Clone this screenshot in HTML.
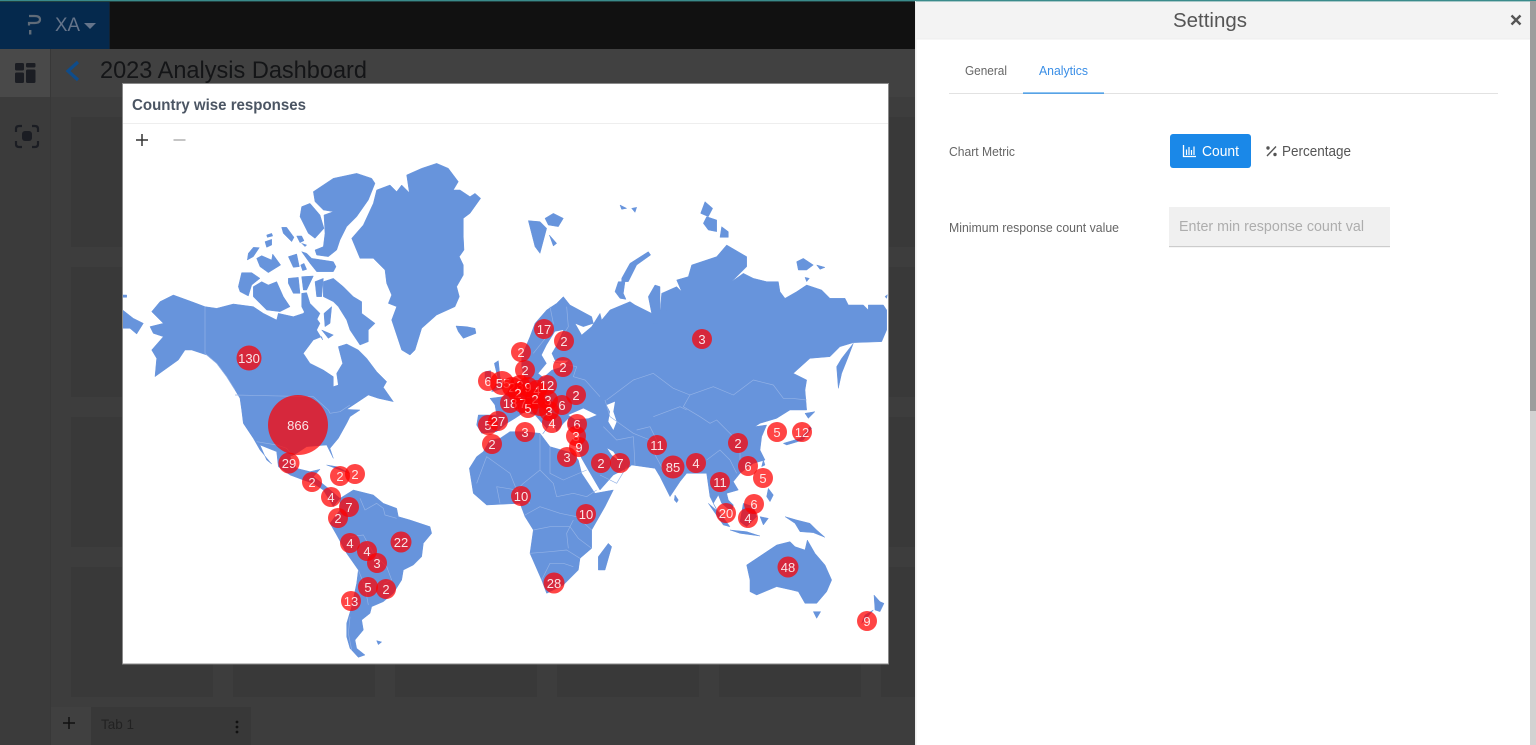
<!DOCTYPE html>
<html lang="en">
<head>
<meta charset="utf-8">
<title>Settings</title>
<style>
html,body{margin:0;padding:0;background:#3d3d3d;width:1536px;height:745px;overflow:hidden}
svg{position:absolute;left:0;top:0;display:block}
text{font-family:"Liberation Sans",sans-serif}
.land polygon{fill:#6794dc;stroke:#6794dc;stroke-width:1.5;stroke-linejoin:round}
.sea polygon{fill:#fff;stroke:none}
.bord polyline{fill:none;stroke:#93b2e6;stroke-width:2;stroke-linejoin:round}
.cl circle{fill:#ff0000;fill-opacity:.73}
.cl text{fill:#fff;fill-opacity:.88;font-size:13px;text-anchor:middle}
</style>
</head>
<body>
<svg width="1536" height="745" viewBox="0 0 1536 745" xmlns="http://www.w3.org/2000/svg">
<!-- app background -->
<rect width="1536" height="745" fill="#3d3d3d"/>
<rect x="0" y="0" width="916" height="49" fill="#111"/>
<rect x="0" y="2" width="110" height="47" fill="#05294d"/>
<rect x="109" y="2" width="1" height="47" fill="#123"/>
<rect x="0" y="49" width="50" height="48" fill="#494949"/>
<rect x="0" y="97" width="50" height="648" fill="#3b3b3b"/>
<rect x="50" y="49" width="1" height="696" fill="#383838"/>
<rect x="51" y="49" width="865" height="48" fill="#414141"/>
<g fill="#393939">
<rect x="71" y="117" width="142" height="130"/><rect x="233" y="117" width="142" height="130"/><rect x="395" y="117" width="142" height="130"/><rect x="557" y="117" width="142" height="130"/><rect x="719" y="117" width="142" height="130"/><rect x="881" y="117" width="35" height="130"/>
<rect x="71" y="267" width="142" height="130"/><rect x="233" y="267" width="142" height="130"/><rect x="395" y="267" width="142" height="130"/><rect x="557" y="267" width="142" height="130"/><rect x="719" y="267" width="142" height="130"/><rect x="881" y="267" width="35" height="130"/>
<rect x="71" y="417" width="142" height="130"/><rect x="233" y="417" width="142" height="130"/><rect x="395" y="417" width="142" height="130"/><rect x="557" y="417" width="142" height="130"/><rect x="719" y="417" width="142" height="130"/><rect x="881" y="417" width="35" height="130"/>
<rect x="71" y="567" width="142" height="130"/><rect x="233" y="567" width="142" height="130"/><rect x="395" y="567" width="142" height="130"/><rect x="557" y="567" width="142" height="130"/><rect x="719" y="567" width="142" height="130"/><rect x="881" y="567" width="35" height="130"/>
</g>
<!-- tab bar -->
<rect x="51" y="707" width="40" height="38" fill="#404040"/>
<rect x="91" y="707" width="160" height="38" fill="#383838"/>
<path d="M63 723H75M69 717V729" stroke="#111" stroke-width="1.5"/>
<text x="101" y="729" font-size="14" fill="#222" textLength="33" lengthAdjust="spacingAndGlyphs">Tab 1</text>
<g fill="#111"><circle cx="237" cy="722" r="1.4"/><circle cx="237" cy="727" r="1.4"/><circle cx="237" cy="732" r="1.4"/></g>
<!-- header -->
<path d="M29 25.5V23H34.5Q40 23 40 19.5T34.5 16H29" fill="none" stroke="#5f6b78" stroke-width="2.2"/>
<rect x="29" y="30" width="2.4" height="4.5" fill="#5f6b78"/>
<text x="55" y="31" font-size="19" fill="#65748a" textLength="25" lengthAdjust="spacingAndGlyphs">XA</text>
<path d="M84 23H96L90 29Z" fill="#65748a"/>
<rect x="0" y="0" width="1536" height="1.4" fill="#3a8b8b"/>
<!-- sidebar icons -->
<g fill="#1b1d23">
<rect x="15" y="63" width="9" height="7.5" rx="1.5"/><rect x="15" y="72.5" width="9" height="10.5" rx="1.5"/><rect x="26" y="63" width="9.5" height="4.5" rx="1.2"/><rect x="26" y="69.5" width="9.5" height="13.5" rx="1.5"/>
<rect x="22" y="131" width="10" height="10" rx="3"/>
</g>
<path d="M16 132V129Q16 126 19 126H22M32 126H35Q38 126 38 129V132M38 141V144Q38 147 35 147H32M22 147H19Q16 147 16 144V141" fill="none" stroke="#1b1d23" stroke-width="2.2"/>
<path d="M78 62L68 71L78 80" fill="none" stroke="#0f4c8a" stroke-width="3.2"/>
<text x="100" y="78" font-size="24" fill="#141517" textLength="267" lengthAdjust="spacingAndGlyphs">2023 Analysis Dashboard</text>

<!-- map card -->
<rect x="122.5" y="83.5" width="766" height="580.5" fill="#fff" stroke="#8a8a8a" stroke-width="1"/>
<rect x="123" y="123" width="765" height="1" fill="#eee"/>
<text x="132" y="110" font-size="16" font-weight="bold" fill="#4b5563" textLength="174" lengthAdjust="spacingAndGlyphs">Country wise responses</text>
<path d="M136 140H148M142 134V146" stroke="#333" stroke-width="1.5"/>
<path d="M173.500 140H185.500" stroke="#bbb" stroke-width="1.7"/>

<svg x="123" y="84" width="765" height="579" viewBox="123 84 765 579">
<g transform="translate(120,150) scale(.33333)">
<g class="land">
<!-- Greenland -->
<polygon points="860,75 905,55 950,40 985,55 1015,95 1000,120 1020,120 1050,140 1065,130 1082,145 1050,190 1030,205 1030,260 1032,300 1018,320 1030,345 1030,375 1010,410 1018,440 1005,470 950,495 905,535 885,600 870,615 845,600 825,540 815,510 830,470 805,460 815,435 800,400 795,360 760,325 720,325 695,265 730,225 760,160 770,120 810,105 830,125 845,105 868,128"/>
<polygon points="580,125 640,85 710,70 755,85 765,100 745,150 710,200 680,230 660,270 650,300 625,320 590,315 585,300 610,290 615,250 612,195 640,185 610,180 585,155"/>
<polygon points="545,170 570,160 600,195 612,235 585,265 565,250 540,200"/>
<polygon points="485,232 500,232 522,262 515,275 490,250"/>
<polygon points="530,258 545,258 552,272 540,278"/>
<polygon points="545,280 560,285 555,290"/>
<polygon points="440,255 455,250 458,258 442,262"/>
<polygon points="435,275 455,268 455,285 440,292"/>
<polygon points="385,310 400,292 418,293 400,320 382,330"/>
<polygon points="410,325 425,317 455,330 458,312 482,345 445,368 420,350"/>
<polygon points="505,320 530,312 538,350 520,352"/>
<polygon points="545,305 560,310 575,325 640,335 648,350 640,365 590,365 570,340"/>
<polygon points="542,345 552,340 560,358 548,362"/>
<polygon points="365,368 395,368 420,385 395,405 385,438 360,425 355,410"/>
<polygon points="400,410 425,395 445,405 470,395 490,440 510,470 480,485 440,480 420,460 400,440"/>
<polygon points="505,385 535,382 540,430 520,430 505,400"/>
<polygon points="545,380 580,378 560,420 550,420"/>
<polygon points="585,395 610,385 605,440 590,440"/>
<polygon points="610,395 640,385 670,410 700,440 725,455 725,490 765,520 745,540 745,575 720,585 690,540 680,510 655,470 640,455 610,440"/>
<polygon points="612,490 635,470 630,520 615,530"/>
<polygon points="605,540 640,555 625,565"/>
<polygon points="545,430 560,428 570,460 600,490 590,510 560,500 545,470"/>
<!-- Chukotka west -->
<polygon points="8,480 40,505 70,520 50,552 30,535 8,535"/>
<polygon points="8,435 20,435 20,442 8,442"/>
<!-- North America -->
<polygon points="95,485 120,455 160,435 215,455 255,470 290,475 340,462 400,470 430,490 470,510 475,490 520,500 550,490 565,470 600,520 590,540 608,570 605,560 580,570 550,610 570,640 610,660 640,680 640,710 655,705 650,670 668,640 655,590 680,582 715,600 740,625 770,665 800,695 790,712 820,755 775,745 745,735 700,765 680,778 720,780 690,800 680,820 655,865 630,895 640,925 620,885 560,890 530,910 510,920 530,955 570,965 600,958 580,980 600,995 625,1015 660,1045 640,1070 610,1020 580,1000 550,990 510,975 475,950 470,905 420,885 440,930 455,942 420,900 400,865 370,820 365,780 360,745 345,720 320,680 290,640 260,615 215,600 195,600 175,630 105,680 110,625 95,600 130,560 100,550 90,530 130,520"/>
<polygon points="620,945 650,950 690,970 660,960"/>
<!-- South America -->
<polygon points="660,1045 700,1020 760,1035 790,1060 830,1075 835,1100 870,1110 930,1130 935,1150 910,1180 905,1220 880,1245 850,1260 845,1290 820,1330 790,1355 755,1370 750,1390 725,1410 730,1440 705,1470 710,1495 735,1515 715,1522 690,1495 680,1460 680,1420 695,1370 710,1300 715,1260 680,1210 650,1155 630,1120 660,1080"/>
<polygon points="770,1472 785,1476 775,1484"/>
<!-- Iceland -->
<polygon points="1008,528 1040,530 1065,535 1068,550 1030,565 1015,545"/>
<!-- Svalbard, FJL, Severnaya, Novaya Zemlya, NSI -->
<polygon points="1225,212 1260,215 1280,235 1260,310 1245,290"/>
<polygon points="1275,205 1300,190 1330,205 1315,230 1285,225"/>
<polygon points="1288,255 1310,280 1300,288"/>
<polygon points="1500,165 1520,175 1505,178"/>
<polygon points="1535,175 1550,172 1545,187"/>
<polygon points="1755,155 1778,175 1765,200 1742,190"/>
<polygon points="1760,200 1790,210 1790,245 1765,240 1750,220"/>
<polygon points="1805,230 1825,245 1825,262 1800,262"/>
<polygon points="1505,385 1530,340 1585,305 1592,315 1550,345 1525,395 1505,395"/>
<polygon points="1495,395 1515,395 1510,430 1518,448 1500,445 1485,425"/>
<polygon points="2030,335 2050,325 2080,345 2060,360 2035,360"/>
<polygon points="2090,345 2115,352 2100,358"/>
<polygon points="2055,382 2068,385 2060,395"/>
<polygon points="2295,440 2302,434 2300,445"/>
<!-- Eurasia -->
<polygon points="1330,440 1350,465 1415,500 1420,520 1390,530 1365,520 1385,555 1415,530 1440,490 1445,510 1470,480 1530,455 1545,465 1595,490 1585,440 1605,405 1620,410 1620,480 1645,480 1625,490 1615,520 1600,520 1620,495 1625,430 1670,410 1685,425 1670,390 1705,380 1715,345 1790,320 1820,285 1880,320 1880,350 1835,395 1870,370 1900,385 1940,395 1975,395 1980,425 1995,445 2030,425 2060,405 2105,420 2130,445 2175,445 2185,465 2230,465 2245,480 2245,465 2290,465 2300,480 2300,540 2285,575 2200,578 2160,590 2130,620 2070,625 2020,670 2060,690 2055,720 2060,780 2010,780 1970,805 1920,820 1905,830 1940,825 1925,860 1920,900 1935,930 1900,940 1860,970 1840,995 1855,1020 1820,1030 1825,1050 1840,1065 1835,1085 1805,1060 1795,1035 1780,1060 1800,1095 1825,1130 1795,1090 1770,1040 1760,970 1730,970 1700,970 1680,995 1650,1040 1620,980 1605,955 1535,945 1530,950 1480,975 1440,1020 1405,960 1385,925 1375,900 1380,860 1375,845 1345,830 1345,805 1330,820 1310,845 1300,815 1245,765 1295,815 1285,830 1268,852 1280,835 1245,795 1215,785 1185,805 1160,820 1130,845 1085,850 1070,825 1075,795 1130,795 1125,765 1110,745 1150,740 1175,710 1200,690 1215,690 1205,650 1205,620 1230,560 1245,520 1280,480 1310,460"/>
<polygon points="1123,640 1135,632 1140,680 1150,715 1115,725 1135,690"/>
<polygon points="1095,665 1112,662 1112,690 1095,688"/>
<!-- Africa -->
<polygon points="1048,955 1070,920 1090,905 1110,870 1140,865 1170,845 1210,845 1260,850 1290,890 1360,910 1375,930 1385,970 1425,1030 1480,1020 1455,1070 1415,1140 1415,1195 1380,1225 1375,1260 1330,1305 1280,1330 1265,1290 1230,1210 1240,1140 1215,1100 1200,1060 1100,1065 1060,1030"/>
<polygon points="1465,1180 1475,1190 1455,1260 1435,1260 1435,1220"/>
<!-- Sakhalin, Japan, Asia islands -->
<polygon points="2200,580 2185,620 2165,670 2155,715 2150,650 2165,625"/>
<polygon points="2055,790 2085,785 2065,805"/>
<polygon points="1990,880 2040,865 2070,830 2075,835 2050,870 2000,885"/>
<polygon points="1930,930 1935,945 1925,950"/>
<polygon points="1945,1015 1960,1035 1950,1055 1940,1040"/>
<polygon points="1765,1060 1800,1090 1830,1130 1810,1125"/>
<polygon points="1830,1140 1880,1145 1920,1158 1860,1150"/>
<polygon points="1870,1060 1900,1070 1910,1100 1880,1130 1860,1115"/>
<polygon points="1920,1100 1945,1105 1930,1125"/>
<polygon points="1995,1100 2030,1110 2070,1120 2090,1140 2115,1162 2080,1148 2040,1145 2025,1120"/>
<polygon points="1665,1035 1675,1050 1670,1058 1663,1050"/>
<!-- Australia etc. -->
<polygon points="1880,1245 1940,1205 1970,1185 2010,1175 2025,1190 2055,1200 2062,1170 2085,1210 2115,1245 2135,1290 2120,1325 2090,1360 2055,1360 2035,1325 2015,1320 1970,1310 1910,1335 1890,1325 1890,1290"/>
<polygon points="2080,1385 2102,1385 2090,1405"/>
<polygon points="2262,1335 2280,1355 2292,1360 2280,1385 2265,1380"/>
<polygon points="2260,1380 2240,1405 2225,1420 2235,1395"/>
</g>
<g class="sea">
<polygon points="1305,545 1280,585 1265,615 1280,640 1255,670 1270,682 1295,660 1320,652 1345,632 1305,632 1295,610 1310,585 1330,540"/>
<polygon points="1345,795 1390,775 1430,795 1405,805 1365,808"/>
<polygon points="1460,765 1485,755 1480,785 1490,815 1480,840 1465,815 1470,785"/>
<polygon points="1462,895 1480,905 1500,935 1475,915"/>
</g>
<g class="bord">
<polyline points="255,470 255,610 290,640 320,680 345,720"/>
<polyline points="345,735 580,740 625,780 630,790 660,785 690,765"/>
<polyline points="410,875 470,885 500,895 520,920"/>
<polyline points="720,1045 735,1080 770,1060 790,1075 795,1095 830,1105"/>
<polyline points="690,1160 730,1155 760,1210 800,1250 815,1290 790,1300"/>
<polyline points="715,1260 735,1310 745,1365"/>
<polyline points="690,1400 685,1450 695,1500"/>
<polyline points="1070,1000 1100,920 1170,970 1190,1020 1230,1060"/>
<polyline points="1140,1060 1130,1010 1190,1020 1210,1000 1260,960 1260,850"/>
<polyline points="1290,890 1290,970 1330,990 1400,960"/>
<polyline points="1260,960 1300,1000 1310,1040 1360,1030 1400,1040 1430,1020"/>
<polyline points="1215,1095 1260,1070 1320,1090 1370,1100 1415,1140"/>
<polyline points="1240,1140 1290,1130 1350,1130 1375,1165 1415,1195"/>
<polyline points="1230,1210 1290,1205 1340,1200 1380,1225"/>
<polyline points="1265,1290 1290,1240 1330,1240 1360,1250"/>
<polyline points="1360,1110 1340,1150 1345,1195"/>
<polyline points="1460,750 1540,690 1600,670 1660,715 1710,735 1780,710 1840,735 1900,690 1960,705 1990,745 2015,745 2060,750"/>
<polyline points="1455,750 1470,800 1540,850 1590,870 1620,880"/>
<polyline points="1710,735 1690,770 1740,800 1770,820 1790,810 1830,850 1860,880 1860,930"/>
<polyline points="1600,800 1680,770 1700,780"/>
<polyline points="1550,840 1590,830 1610,870 1600,905 1630,960"/>
<polyline points="1450,830 1490,870 1540,860 1545,945"/>
<polyline points="1290,470 1300,520 1280,560 1240,610"/>
<polyline points="1340,470 1345,530 1320,570"/>
<polyline points="1300,635 1370,650 1360,680 1395,690 1440,740"/>
<polyline points="1760,930 1800,900 1830,930 1850,970"/>
<polyline points="1440,975 1490,1000 1520,950"/>
</g>
</g>
<g class="cl">
<circle cx="298" cy="425" r="30"/><text x="298" y="430">866</text>
<circle cx="249" cy="358" r="12.500"/><text x="249" y="363">130</text>
<circle cx="289" cy="463" r="10.500"/><text x="289" y="468">29</text>
<circle cx="312" cy="482" r="10"/><text x="312" y="487">2</text>
<circle cx="340" cy="476" r="10"/><text x="340" y="481">2</text>
<circle cx="355" cy="474" r="10"/><text x="355" y="479">2</text>
<circle cx="331" cy="497" r="10"/><text x="331" y="502">4</text>
<circle cx="349" cy="507" r="10"/><text x="349" y="512">7</text>
<circle cx="338" cy="518" r="10"/><text x="338" y="523">2</text>
<circle cx="350" cy="543" r="10"/><text x="350" y="548">4</text>
<circle cx="367" cy="551" r="10"/><text x="367" y="556">4</text>
<circle cx="377" cy="563" r="10"/><text x="377" y="568">3</text>
<circle cx="401" cy="542" r="10.500"/><text x="401" y="547">22</text>
<circle cx="368" cy="587" r="10"/><text x="368" y="592">5</text>
<circle cx="386" cy="589" r="10"/><text x="386" y="594">2</text>
<circle cx="351" cy="601" r="10"/><text x="351" y="606">13</text>
<circle cx="544" cy="329" r="10"/><text x="544" y="334">17</text>
<circle cx="564" cy="341" r="10"/><text x="564" y="346">2</text>
<circle cx="521" cy="352" r="10"/><text x="521" y="357">2</text>
<circle cx="525" cy="370" r="10"/><text x="525" y="375">2</text>
<circle cx="563" cy="367" r="10"/><text x="563" y="372">2</text>
<circle cx="488" cy="381" r="10"/><text x="488" y="386">6</text>
<circle cx="502" cy="383" r="12"/><text x="503" y="388">55</text>
<circle cx="512" cy="387" r="10"/><text x="512" y="392">2</text>
<circle cx="520" cy="385" r="10"/><text x="520" y="390">3</text>
<circle cx="528" cy="387" r="10"/><text x="528" y="392">9</text>
<circle cx="518" cy="393" r="10"/><text x="518" y="398">2</text>
<circle cx="537" cy="390" r="10"/><text x="537" y="395">4</text>
<circle cx="547" cy="385" r="10"/><text x="547" y="390">12</text>
<circle cx="510" cy="403" r="10"/><text x="510" y="408">18</text>
<circle cx="523" cy="403" r="10"/><text x="523" y="408">7</text>
<circle cx="528" cy="408" r="10"/><text x="528" y="413">5</text>
<circle cx="535" cy="399" r="10"/><text x="535" y="404">2</text>
<circle cx="548" cy="400" r="10"/><text x="548" y="405">3</text>
<circle cx="540" cy="407" r="9"/>
<circle cx="549" cy="411" r="10"/><text x="549" y="416">3</text>
<circle cx="562" cy="405" r="10"/><text x="562" y="410">6</text>
<circle cx="576" cy="395" r="10"/><text x="576" y="400">2</text>
<circle cx="552" cy="423" r="10"/><text x="552" y="428">4</text>
<circle cx="488" cy="425" r="10"/><text x="488" y="430">5</text>
<circle cx="498" cy="421" r="10"/><text x="498" y="426">27</text>
<circle cx="525" cy="432" r="10"/><text x="525" y="437">3</text>
<circle cx="492" cy="444" r="10"/><text x="492" y="449">2</text>
<circle cx="577" cy="424" r="10"/><text x="577" y="429">6</text>
<circle cx="576" cy="436" r="10"/><text x="576" y="441">3</text>
<circle cx="579" cy="447" r="10"/><text x="579" y="452">9</text>
<circle cx="567" cy="457" r="10"/><text x="567" y="462">3</text>
<circle cx="601" cy="463" r="10"/><text x="601" y="468">2</text>
<circle cx="620" cy="463" r="10"/><text x="620" y="468">7</text>
<circle cx="657" cy="445" r="10"/><text x="657" y="450">11</text>
<circle cx="673" cy="467" r="11.500"/><text x="673" y="472">85</text>
<circle cx="696" cy="463" r="10"/><text x="696" y="468">4</text>
<circle cx="720" cy="482" r="10"/><text x="720" y="487">11</text>
<circle cx="738" cy="443" r="10"/><text x="738" y="448">2</text>
<circle cx="748" cy="466" r="10"/><text x="748" y="471">6</text>
<circle cx="763" cy="478" r="10"/><text x="763" y="483">5</text>
<circle cx="777" cy="432" r="10"/><text x="777" y="437">5</text>
<circle cx="802" cy="432" r="10"/><text x="802" y="437">12</text>
<circle cx="726" cy="513" r="10"/><text x="726" y="518">20</text>
<circle cx="754" cy="504" r="10"/><text x="754" y="509">6</text>
<circle cx="748" cy="518" r="10"/><text x="748" y="523">4</text>
<circle cx="788" cy="567" r="10.500"/><text x="788" y="572">48</text>
<circle cx="586" cy="514" r="10"/><text x="586" y="519">10</text>
<circle cx="554" cy="583" r="10.500"/><text x="554" y="588">28</text>
<circle cx="867" cy="621" r="10"/><text x="867" y="626">9</text>
<circle cx="521" cy="496" r="10"/><text x="521" y="501">10</text>
<circle cx="702" cy="339" r="10"/><text x="702" y="344">3</text>
</g>
</svg>

<!-- settings panel -->
<rect x="915" y="1" width="615" height="744" fill="#fff"/>
<rect x="915" y="1" width="1.500" height="744" fill="#ececec"/>
<rect x="916" y="1" width="614" height="38" fill="#f3f3f3"/>
<rect x="916" y="38.500" width="614" height="1" fill="#eee"/>
<rect x="916" y="0" width="620" height="1.400" fill="#3a8b8b"/>
<rect x="1530" y="1" width="6" height="410" fill="#9d9d9d"/>
<rect x="1530" y="411" width="6" height="334" fill="#d2d2d2"/>
<text x="1173" y="27" font-size="20" fill="#555" textLength="74" lengthAdjust="spacingAndGlyphs">Settings</text>
<path d="M1511.500 15.500L1520.500 24.500M1520.500 15.500L1511.500 24.500" stroke="#555" stroke-width="2.400"/>
<text x="965" y="75" font-size="12.500" fill="#666" textLength="42" lengthAdjust="spacingAndGlyphs">General</text>
<text x="1039" y="75" font-size="12.500" fill="#3a8ee6" textLength="49" lengthAdjust="spacingAndGlyphs">Analytics</text>
<rect x="949" y="93" width="549" height="1" fill="#e2e2e2"/>
<rect x="1023" y="92.500" width="81" height="1.200" fill="#1e88e5"/>
<text x="949" y="156" font-size="12.500" fill="#666" textLength="66" lengthAdjust="spacingAndGlyphs">Chart Metric</text>
<rect x="1170" y="134" width="81" height="34" rx="3" fill="#1a88e8"/>
<path d="M1183.500 145V156.500H1196" fill="none" stroke="#fff" stroke-width="1.300"/>
<path d="M1186.500 149.500V155M1189 147V155M1191.500 150V155M1194 146.500V155" stroke="#fff" stroke-width="1.200"/>
<text x="1202" y="156" font-size="14.500" fill="#fff" textLength="37" lengthAdjust="spacingAndGlyphs">Count</text>
<path d="M1267 156L1276 146.500" stroke="#555" stroke-width="1.400"/>
<circle cx="1268" cy="148" r="1.700" fill="#555"/><circle cx="1275" cy="154.500" r="1.700" fill="#555"/>
<text x="1282" y="156" font-size="14.500" fill="#555" textLength="69" lengthAdjust="spacingAndGlyphs">Percentage</text>
<text x="949" y="232" font-size="12.500" fill="#666" textLength="170" lengthAdjust="spacingAndGlyphs">Minimum response count value</text>
<rect x="1169" y="207" width="221" height="39" fill="#f0f0f0"/>
<rect x="1169" y="246" width="221" height="1.200" fill="#ccc"/>
<text x="1179" y="231" font-size="14.500" fill="#adadad" textLength="185" lengthAdjust="spacingAndGlyphs">Enter min response count val</text>
</svg>
</body>
</html>
